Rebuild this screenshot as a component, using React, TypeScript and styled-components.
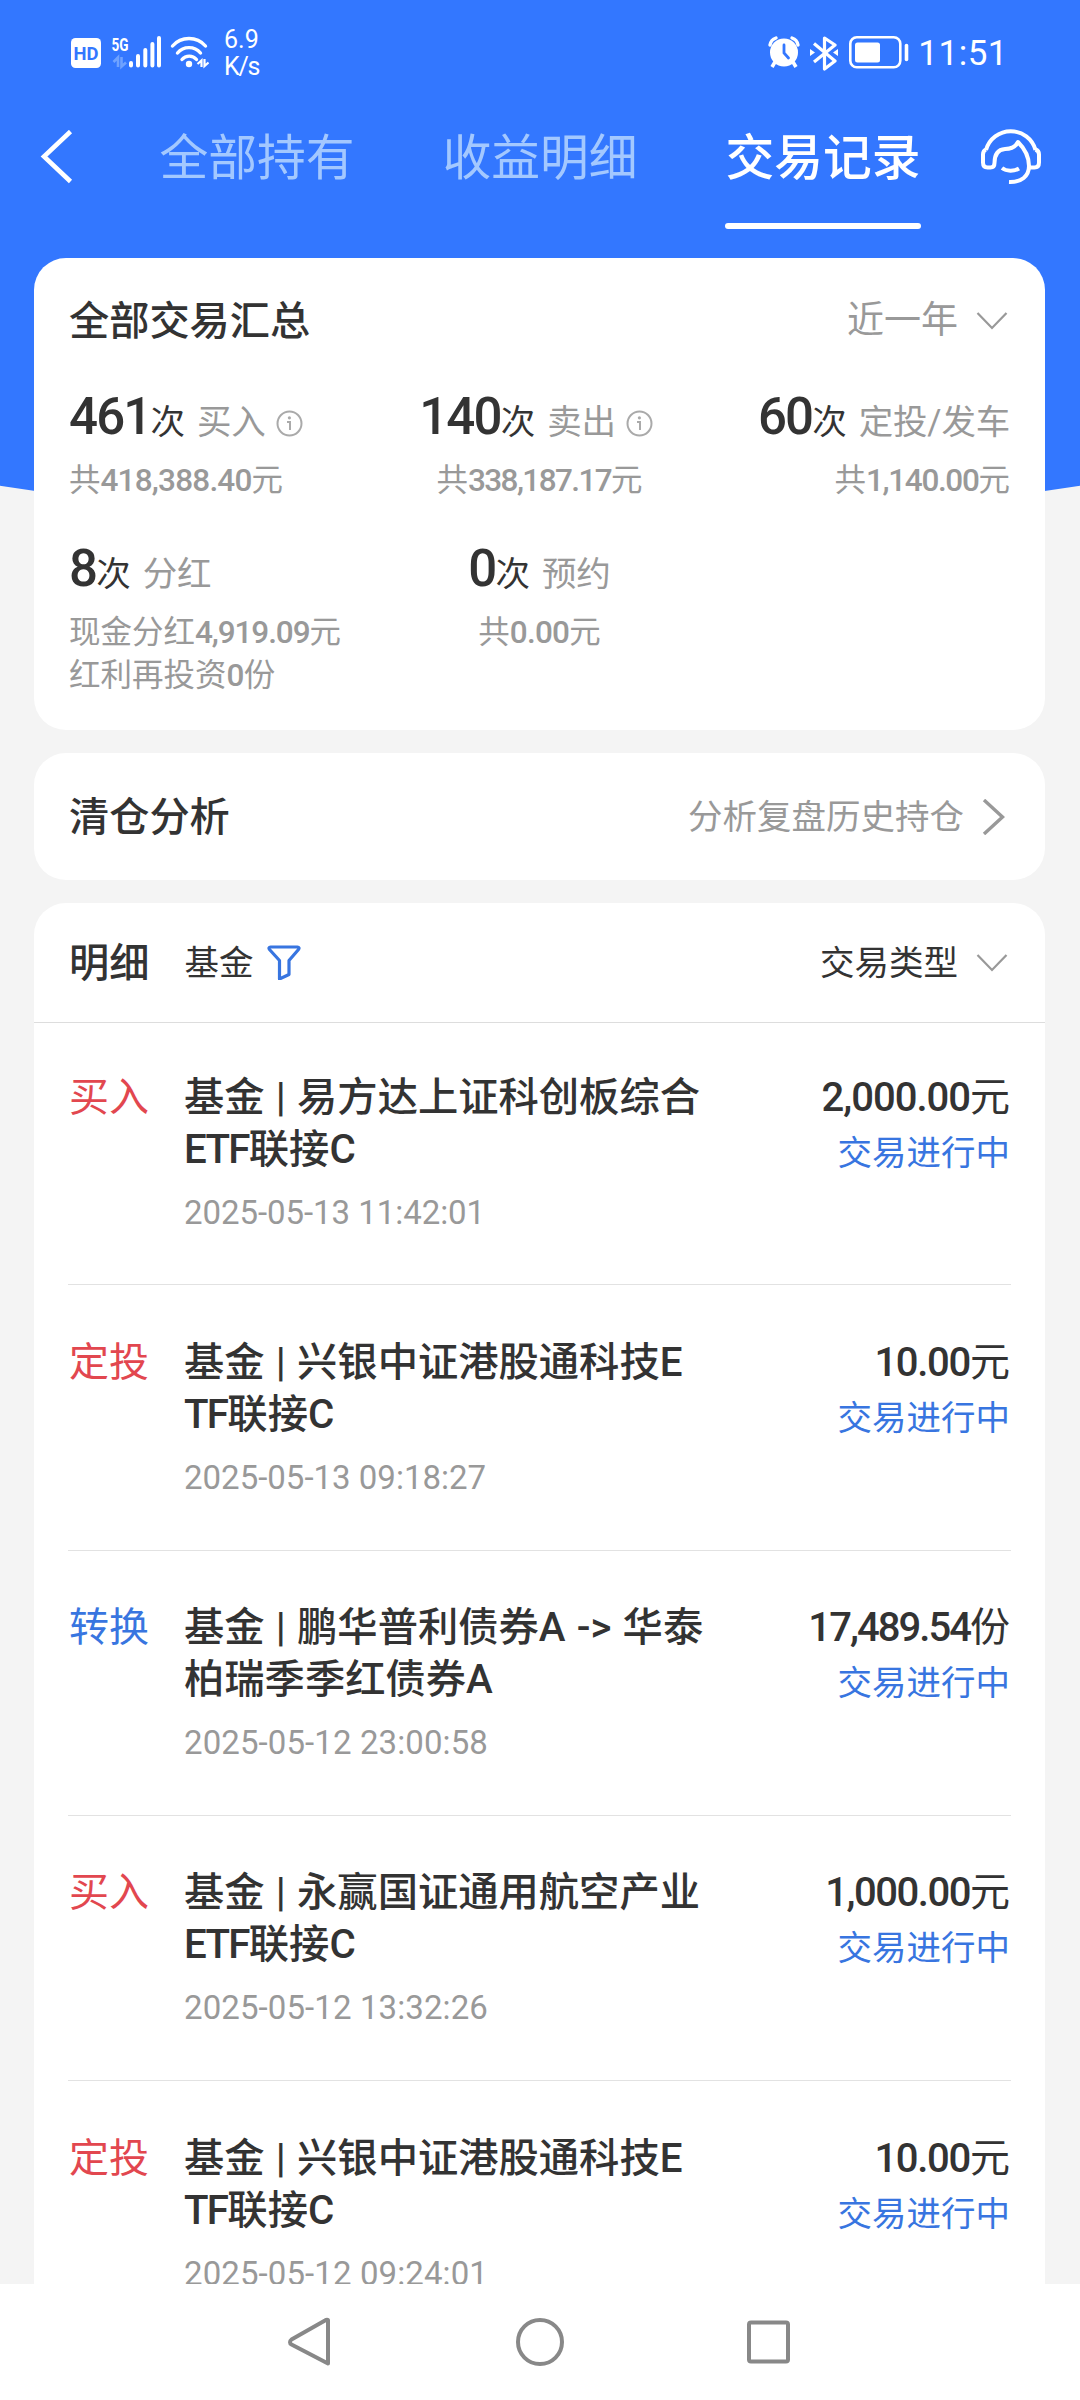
import React from "react";
import styled, { createGlobalStyle } from "styled-components";

const BLUE = "#3377ff";
const LINK = "#3875e0";
const RED = "#e2474f";
const INK = "#333333";
const GREY = "#999999";

const Global = createGlobalStyle`
  * { box-sizing: border-box; }
  body { margin: 0; background: #f4f4f4; }
`;

const Screen = styled.div`
  width: 1080px;
  height: 2400px;
  display: flex;
  flex-direction: column;
  overflow: hidden;
  background: #f4f4f4;
  color: ${INK};
  font-family: Roboto, "Noto Sans CJK SC", sans-serif;
  white-space: nowrap;
`;

const Header = styled.header`
  height: 522px;
  flex: none;
  display: flex;
  flex-direction: column;
  background: ${BLUE};
  color: #fff;
  border-radius: 0 0 50% 50% / 0 0 115px 115px;
  margin: 0 -200px;
  padding: 0 200px;
`;

const StatusBar = styled.div`
  height: 105px;
  display: flex;
  justify-content: space-between;
  padding: 0 72px 0 71px;
`;

const StatusGroup = styled.div`
  display: flex;
  align-items: center;
`;

const Speed = styled.div`
  margin-left: 15px;
  font-size: 25px;
  line-height: 27px;
`;

const SpeedUnit = styled.div`
  letter-spacing: -1.2px;
`;

const Clock = styled.div`
  margin-left: 9px;
  font-size: 35px;
  line-height: 44px;
  padding-top: 2px;
  letter-spacing: 0.5px;
`;

const NavBar = styled.nav`
  height: 153px;
  display: flex;
  align-items: flex-start;
  padding-left: 40px;
`;

const BackIcon = styled.svg`
  margin-top: 25px;
`;

const Tabs = styled.div`
  display: flex;
  gap: 87px;
  margin-left: 86px;
`;

const Tab = styled.div<{ $active?: boolean }>`
  width: 196px;
  height: 124px;
  padding-top: 18px;
  font-size: 48.8px;
  line-height: 72px;
  font-weight: ${(p) => (p.$active ? 500 : 400)};
  color: ${(p) => (p.$active ? "#fff" : "#a3c8ff")};
  text-align: center;
  display: flex;
  flex-direction: column;
  justify-content: space-between;
`;

const TabLine = styled.div`
  height: 6px;
  border-radius: 3px;
  background: #fff;
`;

const HeadsetIcon = styled.svg`
  margin: 22px 0 0 58px;
`;

const Content = styled.main`
  flex: 1;
  min-height: 0;
  overflow: hidden;
  display: flex;
  flex-direction: column;
  gap: 23px;
  margin-top: -264px;
  padding: 0 35px 0 34px;
`;

const Card = styled.section`
  flex: none;
  background: #fff;
  border-radius: 32px;
`;

const SummaryCard = styled(Card)`
  height: 472px;
  padding: 35px 35px 0 35px;
`;

const SpaceRow = styled.div`
  display: flex;
  align-items: center;
  justify-content: space-between;
`;

const Title = styled.h2`
  margin: 0;
  padding-top: 2px;
  font-size: 40.2px;
  line-height: 54px;
  font-weight: 500;
`;

const Picker = styled.div<{ $size: number; $color: string }>`
  display: flex;
  align-items: center;
  gap: 18px;
  padding-right: 2px;
  font-size: ${(p) => p.$size}px;
  line-height: 54px;
  color: ${(p) => p.$color};
`;

const StatGrid = styled.div`
  display: grid;
  grid-template-columns: 1fr 1fr 1fr;
  margin-top: 34px;
  row-gap: 22px;
`;

const Stat = styled.div<{ $align: string }>`
  display: flex;
  flex-direction: column;
  align-items: ${(p) => p.$align};
`;

const StatHead = styled.div<{ $trail: number }>`
  height: 68px;
  display: flex;
  align-items: baseline;
  padding-right: ${(p) => p.$trail}px;
  font-size: 34.5px;
  line-height: 68px;
`;

const Count = styled.span`
  font-size: 51px;
  font-weight: 500;
  letter-spacing: -1.8px;
`;

const Label = styled.span`
  margin-left: 12px;
  letter-spacing: -0.2px;
  color: ${GREY};
`;

const InfoIcon = styled.svg`
  margin-left: 10px;
  align-self: center;
  position: relative;
  top: 6px;
`;

const StatSub = styled.div`
  min-height: 62px;
  padding-top: 8px;
  font-size: 31.5px;
  line-height: 43px;
  font-weight: 400;
  color: ${GREY};
`;

const Num = styled.span<{ $track: number }>`
  font-weight: 500;
  letter-spacing: ${(p) => p.$track}px;
`;

const AnalysisCard = styled(Card)`
  height: 127px;
  display: flex;
  align-items: center;
  justify-content: space-between;
  padding: 0 39px 0 35px;
`;

const More = styled.div`
  display: flex;
  align-items: center;
  gap: 17px;
  font-size: 34.5px;
  line-height: 54px;
  color: ${GREY};
`;

const DetailCard = styled(Card)`
  height: 1500px;
`;

const DetailHead = styled(SpaceRow)`
  height: 120px;
  padding: 0 35px 0 35px;
  border-bottom: 1px solid #dddddd;
`;

const FilterGroup = styled.div`
  display: flex;
  align-items: center;
  font-size: 34.5px;
  line-height: 54px;
`;

const FilterName = styled.span`
  margin: 0 14px 0 35px;
`;

const RecordList = styled.div`
  margin-top: -3px;
  padding: 0 34px;
`;

const Record = styled.article`
  height: 265.25px;
  display: flex;
  padding: 51.5px 1px 0 1px;
  border-bottom: 1px solid #e2e2e2;
`;

const Kind = styled.div<{ $color: string }>`
  width: 115px;
  font-size: 40px;
  line-height: 52px;
  color: ${(p) => p.$color};
`;

const Fund = styled.div`
  flex: 1;
`;

const FundName = styled.div`
  font-size: 40.3px;
  line-height: 52px;
  font-weight: 500;
  white-space: pre-line;
  word-spacing: 1.2px;
`;

const Latin = styled.span`
  letter-spacing: -1.7px;
`;

const Time = styled.div<{ $track: number }>`
  margin-top: 13px;
  font-size: 33px;
  line-height: 48px;
  letter-spacing: ${(p) => p.$track}px;
  color: ${GREY};
`;

const Result = styled.div`
  text-align: right;
`;

const Amount = styled.div`
  font-size: 40px;
  line-height: 52px;
`;

const State = styled.div`
  margin-top: 3px;
  font-size: 34.5px;
  line-height: 52px;
  color: ${LINK};
`;

const SystemBar = styled.footer`
  height: 116px;
  flex: none;
  display: flex;
  align-items: center;
  justify-content: center;
  gap: 181px;
  background: #fff;
`;

const ChevronDown = () => (
  <svg width="32" height="20" viewBox="0 0 32 20" fill="none">
    <path d="M1.5 2 16 17 30.5 2" stroke="#999" strokeWidth="2.2" />
  </svg>
);

const Info = () => (
  <InfoIcon width="27" height="27" viewBox="0 0 27 27" fill="none">
    <circle cx="13.5" cy="13.5" r="12" stroke="#aaa" strokeWidth="2" />
    <path d="M11 12h3v8" stroke="#aaa" strokeWidth="2" />
    <circle cx="13.4" cy="7.8" r="1.6" fill="#aaa" />
  </InfoIcon>
);

interface SubLine {
  before: string;
  value: string;
  unit: string;
  track: number;
}

interface StatData {
  count: string;
  label: string;
  info?: boolean;
  align: string;
  trail?: number;
  subs: SubLine[];
}

const stats: StatData[] = [
  { count: "461", label: "买入", info: true, align: "flex-start", subs: [{ before: "共", value: "418,388.40", unit: "元", track: -0.8 }] },
  { count: "140", label: "卖出", info: true, align: "center", trail: 7, subs: [{ before: "共", value: "338,187.17", unit: "元", track: -1.6 }] },
  { count: "60", label: "定投/发车", align: "flex-end", subs: [{ before: "共", value: "1,140.00", unit: "元", track: -1.35 }] },
  {
    count: "8",
    label: "分红",
    align: "flex-start",
    subs: [
      { before: "现金分红", value: "4,919.09", unit: "元", track: -1.1 },
      { before: "红利再投资", value: "0", unit: "份", track: -0.6 },
    ],
  },
  { count: "0", label: "预约", align: "center", subs: [{ before: "共", value: "0.00", unit: "元", track: -0.8 }] },
];

const records = [
  { kind: "买入", color: RED, name: "基金 | 易方达上证科创板综合\nETF联接C", time: "2025-05-13 11:42:01", timeTrack: -0.05, amount: "2,000.00", track: -1, unit: "元" },
  { kind: "定投", color: RED, name: "基金 | 兴银中证港股通科技E\nTF联接C", time: "2025-05-13 09:18:27", timeTrack: 0, amount: "10.00", track: -1.3, unit: "元" },
  { kind: "转换", color: LINK, name: "基金 | 鹏华普利债券A -> 华泰\n柏瑞季季红债券A", time: "2025-05-12 23:00:58", timeTrack: 0.1, amount: "17,489.54", track: -1.95, unit: "份" },
  { kind: "买入", color: RED, name: "基金 | 永赢国证通用航空产业\nETF联接C", time: "2025-05-12 13:32:26", timeTrack: 0.1, amount: "1,000.00", track: -1.45, unit: "元" },
  { kind: "定投", color: RED, name: "基金 | 兴银中证港股通科技E\nTF联接C", time: "2025-05-12 09:24:01", timeTrack: 0.1, amount: "10.00", track: -1.3, unit: "元" },
];

const SignalIcons = () => (
  <svg width="138" height="56" viewBox="71 25 138 56" fill="none">
    <rect x="71" y="38" width="30" height="30" rx="4.5" fill="#fff" />
    <text x="73.5" y="59.5" fontSize="18.5" fontWeight="700" fill={BLUE} textLength="25" lengthAdjust="spacingAndGlyphs">HD</text>
    <text x="111.5" y="50.5" fontSize="19" fontWeight="700" fill="#fff" textLength="17" lengthAdjust="spacingAndGlyphs">5G</text>
    <path d="M118 67V57.500l-4.500 4.500M121.500 57v9.500l4.500-4" stroke="#6fa2ff" strokeWidth="2.600" />
    <path d="M131 63v2.500M138 56v9.500M145.300 50v15.500M152.400 44v21.500M159 38v27.500" stroke="#fff" strokeWidth="4" strokeLinecap="round" />
    <path d="M172.500 46a22 22 0 0 1 33 0M177.500 53a15 15 0 0 1 23 0M182 59.500a9.500 9.500 0 0 1 14.500 0" stroke="#fff" strokeWidth="3.400" strokeLinecap="round" />
    <circle cx="189" cy="64" r="3.200" fill="#fff" />
    <path d="M201.500 67v-6.500l-4 3.500M204.500 59v7l4-3.500" stroke="#fff" strokeWidth="2.200" />
  </svg>
);

const DeviceIcons = () => (
  <svg width="142" height="36" viewBox="767 35 142 36" fill="none">
    <circle cx="784" cy="52.500" r="14" fill="#fff" />
    <path d="M770 45a9 9 0 0 1 6-7M798 45a9 9 0 0 0-6-7" stroke="#fff" strokeWidth="3.400" strokeLinecap="round" />
    <path d="m775 62-3 5M793 62l3 5" stroke="#fff" strokeWidth="3.600" />
    <path d="M784 45v8l4.500 5" stroke={BLUE} strokeWidth="2.800" strokeLinecap="round" />
    <path d="m814 43.500 21 17.500-10.500 8V38l10.500 7-21 17" stroke="#fff" strokeWidth="3.200" strokeLinejoin="round" />
    <path d="m810 49 5 3.500-5 3.500zM838 49l-5 3.500 5 3.500z" fill="#fff" />
    <rect x="850.300" y="37.300" width="50" height="30" rx="6.500" stroke="#fff" strokeWidth="2.600" />
    <rect x="855" y="42.500" width="25" height="20" rx="2.500" fill="#fff" />
    <path d="M906.500 45.500v14" stroke="#fff" strokeWidth="3.600" strokeLinecap="round" />
  </svg>
);

const withLatin = (text: string) =>
  text.split(/([B-Z]+)/).map((part, i) => (i % 2 ? <Latin key={i}>{part}</Latin> : part));

export default function App() {
  return (
    <Screen>
      <Global />
      <Header>
        <StatusBar>
          <StatusGroup>
            <SignalIcons />
            <Speed>
              <div>6.9</div>
              <SpeedUnit>K/s</SpeedUnit>
            </Speed>
          </StatusGroup>
          <StatusGroup>
            <DeviceIcons />
            <Clock>11:51</Clock>
          </StatusGroup>
        </StatusBar>
        <NavBar>
          <BackIcon width="33" height="54" viewBox="0 0 33 54" fill="none">
            <path d="M30.500 1.500 4 26.500l26.500 25" stroke="#fff" strokeWidth="4.600" />
          </BackIcon>
          <Tabs>
            <Tab>全部持有</Tab>
            <Tab>收益明细</Tab>
            <Tab $active>
              交易记录
              <TabLine />
            </Tab>
          </Tabs>
          <HeadsetIcon width="64" height="60" viewBox="979 127 64 60" fill="none" stroke="#fff" strokeWidth="4" strokeLinejoin="round" strokeLinecap="butt">
            <path d="M986 150a25.700 25.700 0 0 1 49.500 0" />
            <path d="M986 149.500c-2.500 1-3 2.500-3 5v8c0 3.500 1.500 5 4.500 5h3c3 0 4-1.500 4-4.500 0-9 4-13.500 10.500-14 7 0 10.500-2 13-7 6 6 11 14 11 24 0 10-7.500 16.500-20 16" />
            <path d="M1035.500 149.500c2.800 1 3.500 2.500 3.500 5v8c0 3.500-1.500 5-4.500 5h-6" />
            <path d="M1002 168c4.500 3.500 12 3.500 17 .5" />
          </HeadsetIcon>
        </NavBar>
      </Header>
      <Content>
        <SummaryCard>
          <SpaceRow>
            <Title>全部交易汇总</Title>
            <Picker $size={37} $color={GREY}>
              近一年
              <ChevronDown />
            </Picker>
          </SpaceRow>
          <StatGrid>
            {stats.map((s) => (
              <Stat key={s.label} $align={s.align}>
                <StatHead $trail={s.trail ?? 0}>
                  <Count>{s.count}</Count>次<Label>{s.label}</Label>
                  {s.info && <Info />}
                </StatHead>
                <StatSub>
                  {s.subs.map((line) => (
                    <div key={line.before}>
                      {line.before}
                      <Num $track={line.track}>{line.value}</Num>
                      {line.unit}
                    </div>
                  ))}
                </StatSub>
              </Stat>
            ))}
          </StatGrid>
        </SummaryCard>
        <AnalysisCard>
          <Title>清仓分析</Title>
          <More>
            分析复盘历史持仓
            <svg width="25" height="36" viewBox="0 0 25 36" fill="none">
              <path d="M3 1 21.500 18 3 35" stroke="#999" strokeWidth="3.400" />
            </svg>
          </More>
        </AnalysisCard>
        <DetailCard>
          <DetailHead>
            <FilterGroup>
              <Title>明细</Title>
              <FilterName>基金</FilterName>
              <svg width="34" height="35" viewBox="0 0 34 35" fill="none">
                <path d="M3.500 2h27c1.500 0 2 1.300 1 2.500L22 15.500v14l-9.500 4.500V15.500L2.500 4.500C1.500 3.300 2 2 3.500 2Z" stroke={LINK} strokeWidth="3.200" strokeLinejoin="round" />
              </svg>
            </FilterGroup>
            <Picker $size={34.5} $color={INK}>
              交易类型
              <ChevronDown />
            </Picker>
          </DetailHead>
          <RecordList>
            {records.map((r) => (
              <Record key={r.time}>
                <Kind $color={r.color}>{r.kind}</Kind>
                <Fund>
                  <FundName>{withLatin(r.name)}</FundName>
                  <Time $track={r.timeTrack}>{r.time}</Time>
                </Fund>
                <Result>
                  <Amount>
                    <Num $track={r.track}>{r.amount}</Num>
                    {r.unit}
                  </Amount>
                  <State>交易进行中</State>
                </Result>
              </Record>
            ))}
          </RecordList>
        </DetailCard>
      </Content>
      <SystemBar>
        <svg width="48" height="50" viewBox="0 0 48 50" fill="none">
          <path d="M42 3.500v43L5.500 27.500c-2-1-2-3.500 0-5L39 3.500c1.500-1 3-1 3 0Z" stroke="#888" strokeWidth="4" strokeLinejoin="round" />
        </svg>
        <svg width="50" height="50" viewBox="0 0 50 50" fill="none">
          <circle cx="25" cy="25" r="22" stroke="#888" strokeWidth="4" />
        </svg>
        <svg width="48" height="50" viewBox="0 0 48 50" fill="none">
          <rect x="3" y="5.500" width="39" height="39" rx="2" stroke="#888" strokeWidth="4" />
        </svg>
      </SystemBar>
    </Screen>
  );
}
